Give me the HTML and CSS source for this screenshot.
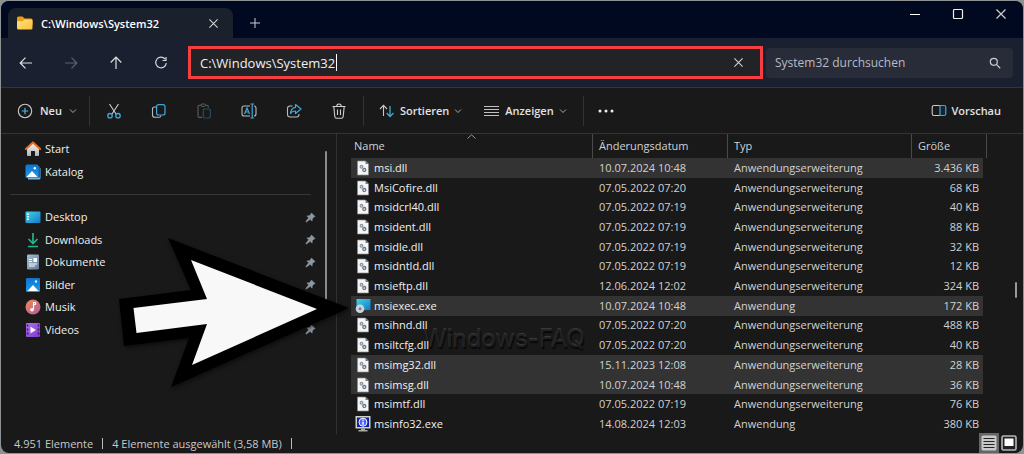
FILE: index.html
```html
<!DOCTYPE html>
<html lang="de">
<head>
<meta charset="utf-8">
<title>C:\Windows\System32</title>
<link rel="stylesheet" href="styles.css">
</head>
<body>
<svg class="defs" aria-hidden="true">
  <defs>
    <linearGradient id="g-folder" x1="0" y1="0" x2="1" y2="1"><stop offset="0" stop-color="#ffe28c"/><stop offset="1" stop-color="#fcc02e"/></linearGradient>
    <linearGradient id="g-desk" x1="0" y1="0" x2="1" y2="1"><stop offset="0" stop-color="#3fd6e6"/><stop offset="1" stop-color="#1478c8"/></linearGradient>
    <linearGradient id="g-pic" x1="0" y1="0" x2="0" y2="1"><stop offset="0" stop-color="#1173cf"/><stop offset="1" stop-color="#199bea"/></linearGradient>
    <linearGradient id="g-music" x1="0" y1="0" x2="1" y2="1"><stop offset="0" stop-color="#f08a52"/><stop offset="1" stop-color="#b15a9c"/></linearGradient>
    <linearGradient id="g-video" x1="0" y1="0" x2="1" y2="1"><stop offset="0" stop-color="#b070f0"/><stop offset="1" stop-color="#8038cf"/></linearGradient>
    <linearGradient id="g-doc" x1="0" y1="0" x2="1" y2="1"><stop offset="0" stop-color="#a9bdd2"/><stop offset="1" stop-color="#5f7b9b"/></linearGradient>
    <linearGradient id="g-house" x1="0" y1="0" x2="0" y2="1"><stop offset="0" stop-color="#f4f4f4"/><stop offset="1" stop-color="#b4b4b4"/></linearGradient>
  </defs>
  <symbol id="dll" viewBox="0 0 14 16">
    <path d="M1.500 1h8l3 3v11h-11z" fill="#f5f5f5" stroke="#8d8d8d" stroke-width=".7"/>
    <path d="M9.500 1v3h3z" fill="#777"/>
    <circle cx="5.500" cy="6.800" r="1.300" fill="none" stroke="#8a97a3" stroke-width="1.300"/>
    <circle cx="8.300" cy="10" r="1.500" fill="none" stroke="#697785" stroke-width="1.300"/>
  </symbol>
  <symbol id="pin" viewBox="0 0 12 12">
    <path d="M7 1l4 4-1.200.5-1.800 1.800-.3 2.700-2-2L1.500 11l-.7-.6L4 6.400 2 4.300l2.800-.3L6.500 2.200z" fill="#8d979f" stroke="#8d979f" stroke-width=".6"/>
  </symbol>
  <symbol id="chev" viewBox="0 0 8 8"><path d="M1 2.500l3 3 3-3" fill="none" stroke="#aaa" stroke-width="1"/></symbol>
  <symbol id="cross" viewBox="0 0 12 12"><path d="M1.500 1.500l9 9m0-9l-9 9" fill="none" stroke="#d0d0d0" stroke-width="1.200"/></symbol>
</svg>

<main class="window">
  <header class="tabbar">
    <div class="tab">
      <svg width="16" height="14" viewBox="0 0 16 14"><path d="M0 2q0-1.500 1.500-1.500h4L7.500 2.500H14q1.500 0 1.500 1.500v5H0z" fill="#e8a010"/><path d="M0 5.200h5.500L7.500 3.500h6.500q1.500 0 1.500 1.200V12q0 1.500-1.500 1.500h-12.500Q0 13.500 0 12z" fill="url(#g-folder)"/></svg>
      <span class="tab-title">C:\Windows\System32</span>
      <button class="icon-btn" aria-label="Tab schließen"><svg width="11" height="11"><use href="#cross"/></svg></button>
    </div>
    <button class="icon-btn new-tab" aria-label="Neuer Tab"><svg width="12" height="12" viewBox="0 0 12 12"><path d="M6 1v10M1 6h10" stroke="#c8ccd4" fill="none"/></svg></button>
    <div class="caption">
      <button class="icon-btn" aria-label="Minimieren"><svg width="12" height="12" viewBox="0 0 12 12"><path d="M1 6.500h10" stroke="#fff" fill="none"/></svg></button>
      <button class="icon-btn" aria-label="Maximieren"><svg width="12" height="12" viewBox="0 0 12 12"><rect x="1.500" y="1.500" width="9" height="9" rx="1" stroke="#eee" fill="none" stroke-width="1.200"/></svg></button>
      <button class="icon-btn" aria-label="Schließen"><svg width="12" height="12"><use href="#cross"/></svg></button>
    </div>
  </header>

  <nav class="navbar" aria-label="Navigation">
    <div class="nav-buttons">
      <button class="icon-btn" aria-label="Zurück"><svg width="14" height="14" viewBox="0 0 14 14"><path d="M13 7H1.500M6.500 1.700L1.200 7l5.300 5.300" stroke="#e0e0e0" fill="none" stroke-width="1.200"/></svg></button>
      <button class="icon-btn" aria-label="Vorwärts"><svg width="14" height="14" viewBox="0 0 14 14"><path d="M1 7h11.500M7.500 1.700L12.800 7l-5.300 5.300" stroke="#5d626e" fill="none" stroke-width="1.200"/></svg></button>
      <button class="icon-btn" aria-label="Nach oben"><svg width="14" height="14" viewBox="0 0 14 14"><path d="M7 13V1.500M1.700 6.500L7 1.200l5.300 5.300" stroke="#e0e0e0" fill="none" stroke-width="1.200"/></svg></button>
      <button class="icon-btn" aria-label="Aktualisieren"><svg width="14" height="14" viewBox="0 0 14 14"><path d="M11 3A5.300 5.300 0 1 0 12.300 7M12 1v3.500H8.500" stroke="#d8d8d8" fill="none" stroke-width="1.200"/></svg></button>
    </div>
    <div class="address">
      <input class="address-input" type="text" aria-label="Adresse" value="C:\Windows\System32">
      <span class="caret"></span>
      <button class="icon-btn clear" aria-label="Leeren"><svg width="11" height="11"><use href="#cross"/></svg></button>
    </div>
    <div class="search">
      <input class="search-input" type="text" aria-label="Suchen" placeholder="System32 durchsuchen">
      <button class="icon-btn" aria-label="Suche starten"><svg width="12" height="12" viewBox="0 0 12 12"><circle cx="4.800" cy="4.800" r="3.500" fill="none" stroke="#ccc" stroke-width="1.200"/><path d="M7.400 7.400l3.800 3.800" stroke="#ccc" stroke-width="1.300"/></svg></button>
    </div>
  </nav>

  <div class="toolbar">
    <button class="tool new"><svg width="16" height="16" viewBox="0 0 16 16"><circle cx="8" cy="8" r="6.700" fill="none" stroke="#c8c8c8" stroke-width="1.100"/><path d="M8 4.800v6.400M4.800 8h6.400" stroke="#4cb4e8" stroke-width="1.200"/></svg>Neu<svg width="8" height="8"><use href="#chev"/></svg></button>
    <div class="actions">
      <button class="icon-btn" aria-label="Ausschneiden"><svg width="16" height="16" viewBox="0 0 16 16"><path d="M3.500 1l6.500 10M12.500 1L6 11" stroke="#d0d0d0" stroke-width="1.100"/><circle cx="4" cy="12.700" r="2.200" fill="none" stroke="#3fa8dc" stroke-width="1.300"/><circle cx="12" cy="12.700" r="2.200" fill="none" stroke="#3fa8dc" stroke-width="1.300"/></svg></button>
      <button class="icon-btn" aria-label="Kopieren"><svg width="16" height="16" viewBox="0 0 16 16"><path d="M5 4H3.500Q1.500 4 1.500 6v6q0 2.300 2.300 2.300H8q1.800 0 2-1.800" fill="none" stroke="#bbb" stroke-width="1.100"/><rect x="5.600" y="1.600" width="8.400" height="10.400" rx="2" fill="none" stroke="#3fa8dc" stroke-width="1.200"/></svg></button>
      <button class="icon-btn" aria-label="Einfügen"><svg width="16" height="16" viewBox="0 0 16 16"><path d="M6 14.400H3.500Q2 14.400 2 13V3.500Q2 2.200 3.500 2.200H5M9.500 2.200H11q1.300 0 1.300 1.300v1" fill="none" stroke="#5e5e5e" stroke-width="1.100"/><rect x="5" y="1" width="4.500" height="2.400" rx="1" fill="none" stroke="#5e5e5e"/><rect x="7.300" y="6" width="7" height="9" rx="1.200" fill="none" stroke="#244f68" stroke-width="1.200"/></svg></button>
      <button class="icon-btn" aria-label="Umbenennen"><svg width="16" height="16" viewBox="0 0 16 16"><path d="M9 3H3Q1 3 1 5v6q0 2 2 2h6M13 3q2 0 2 2v6q0 2-2 2" fill="none" stroke="#bbb" stroke-width="1.100"/><path d="M3.500 11L6 5l2.500 6M4.400 9h3.200M9.500 1h3.500M9.500 15h3.500M11.200 1v14" fill="none" stroke="#3fa8dc" stroke-width="1.200"/></svg></button>
      <button class="icon-btn" aria-label="Freigeben"><svg width="16" height="16" viewBox="0 0 16 16"><path d="M6.500 3H4Q1.500 3 1.500 5.500v6Q1.500 14 4 14h6.500q2.500 0 2.500-2.500V11" fill="none" stroke="#bbb" stroke-width="1.100"/><path d="M9.500 1.500L15 6l-5.500 4.500V8Q6 8 4.500 10.500 5 5 9.500 4.300z" fill="none" stroke="#3fa8dc" stroke-width="1.200" stroke-linejoin="round"/></svg></button>
      <button class="icon-btn" aria-label="Löschen"><svg width="16" height="16" viewBox="0 0 16 16"><path d="M1.500 3.500h13M5.700 3.500Q5.700 1 8 1t2.300 2.500M2.800 3.500l1 10q.2 1.700 1.700 1.700h5q1.500 0 1.700-1.700l1-10M6.500 6.500v5.500M9.500 6.500v5.500" fill="none" stroke="#d0d0d0" stroke-width="1.100"/></svg></button>
    </div>
    <div class="views">
      <button class="tool"><svg width="16" height="16" viewBox="0 0 16 16"><path d="M4.500 13V2.500M1 6l3.500-3.700L8 6" fill="none" stroke="#c8c8c8" stroke-width="1.100"/><path d="M11 3v10.500M7.700 10l3.300 3.500 3.500-3.500" fill="none" stroke="#3fa8dc" stroke-width="1.300"/></svg>Sortieren<svg width="8" height="8"><use href="#chev"/></svg></button>
      <button class="tool"><svg width="16" height="16" viewBox="0 0 16 16"><path d="M0 3.500h15M0 6.500h15M0 9.500h15M0 12.500h15" stroke="#c0c0c0"/></svg>Anzeigen<svg width="8" height="8"><use href="#chev"/></svg></button>
    </div>
    <button class="icon-btn more" aria-label="Mehr"><svg width="16" height="4" viewBox="0 0 16 4"><circle cx="2" cy="2" r="1.500" fill="#eee"/><circle cx="8" cy="2" r="1.500" fill="#eee"/><circle cx="14" cy="2" r="1.500" fill="#eee"/></svg></button>
    <button class="tool preview"><svg width="16" height="14" viewBox="0 0 16 14"><path d="M9 1.500H3q-1.800 0-1.800 1.800v6.400q0 1.800 1.800 1.800h6" fill="none" stroke="#ccc" stroke-width="1.100"/><path d="M9 1.500h4q1.800 0 1.800 1.800v6.400q0 1.800-1.800 1.800H9z" fill="#152630" stroke="#3fa8dc" stroke-width="1.200"/></svg>Vorschau</button>
  </div>

  <div class="content">
    <aside class="sidebar">
      <ul class="places short">
        <li><a href="#"><svg width="16" height="16" viewBox="0 0 16 16"><path d="M2 7.500L8 2l6 5.500V14q0 1-1 1H10V10H6v5H3q-1 0-1-1z" fill="url(#g-house)"/><path d="M.8 8L8 1.400 15.200 8" fill="none" stroke="#e86f1c" stroke-width="2" stroke-linejoin="round" stroke-linecap="round"/></svg>Start</a></li>
        <li><a href="#"><svg width="16" height="16" viewBox="0 0 16 16"><path d="M3 4h12.500v10q0 1.500-1.500 1.500H3z" fill="#6fb7ef"/><path d="M3 2.500h12v11H3z" fill="#0f5fae"/><rect x=".5" y=".5" width="13" height="13.500" rx="1.500" fill="url(#g-pic)"/><path d="M1.500 13L7 7l5.500 6z" fill="#fff"/><circle cx="9.800" cy="4.200" r="1.200" fill="#fff"/></svg>Katalog</a></li>
      </ul>
      <hr class="divider">
      <ul class="places long">
        <li><a href="#"><svg width="16" height="16" viewBox="0 0 16 16"><rect x=".5" y="2.500" width="15" height="11.500" rx="1" fill="url(#g-desk)"/><path d="M2 4.500h2v1.500H2zM2 7h2v1.500H2zM2 9.500h2V11H2z" fill="#e8feff"/></svg>Desktop</a><svg class="pin" width="11" height="11"><use href="#pin"/></svg></li>
        <li><a href="#"><svg width="16" height="16" viewBox="0 0 16 16"><path d="M8 1v10M3.500 7L8 11.500 12.500 7M3 14.500h10" fill="none" stroke="#1fb58d" stroke-width="1.700"/></svg>Downloads</a><svg class="pin" width="11" height="11"><use href="#pin"/></svg></li>
        <li><a href="#"><svg width="16" height="16" viewBox="0 0 16 16"><rect x="2" y=".5" width="12" height="15" rx="1.300" fill="url(#g-doc)"/><path d="M4 5h3v1H4zM4 7h3v1H4zM4 9.500h8v1H4zM4 11.500h6v1H4zM8.500 4H12v4H8.500z" fill="#fff"/></svg>Dokumente</a><svg class="pin" width="11" height="11"><use href="#pin"/></svg></li>
        <li><a href="#"><svg width="16" height="16" viewBox="0 0 16 16"><rect x="1" y="1" width="14" height="14" rx="1.300" fill="url(#g-pic)"/><path d="M2.500 14L8 8l5.500 6z" fill="#fff"/><circle cx="11" cy="4.500" r="1.200" fill="#d8f0ff"/></svg>Bilder</a><svg class="pin" width="11" height="11"><use href="#pin"/></svg></li>
        <li><a href="#"><svg width="16" height="16" viewBox="0 0 16 16"><circle cx="8" cy="8" r="7.500" fill="url(#g-music)"/><path d="M8.500 10.500v-7h2v2h-2" fill="none" stroke="#fff" stroke-width="1.200"/><circle cx="7" cy="10.700" r="1.800" fill="#fff"/></svg>Musik</a><svg class="pin" width="11" height="11"><use href="#pin"/></svg></li>
        <li><a href="#"><svg width="16" height="16" viewBox="0 0 16 16"><rect x="1" y="1" width="14" height="14" rx="1.300" fill="url(#g-video)"/><path d="M2.500 2.500v11M13.500 2.500v11" stroke="#3c1470" stroke-width="1.500" stroke-dasharray="2 2"/><path d="M5.500 4.700L11 8l-5.500 3.300z" fill="#fff"/></svg>Videos</a><svg class="pin" width="11" height="11"><use href="#pin"/></svg></li>
      </ul>
      <span class="side-scroll"></span>
    </aside>

    <section class="pane">
      <table class="files">
        <thead><tr><th class="c-name">Name<svg class="sort" width="9" height="5" viewBox="0 0 9 5"><path d="M.5 4.500l4-3.700 4 3.700" fill="none" stroke="#999"/></svg></th><th class="c-date">Änderungsdatum</th><th class="c-type">Typ</th><th class="c-size">Größe</th></tr></thead>
        <tbody>
          <tr class="sel"><td><svg><use href="#dll"/></svg>msi.dll</td><td>10.07.2024 10:48</td><td>Anwendungserweiterung</td><td>3.436 KB</td></tr>
          <tr><td><svg><use href="#dll"/></svg>MsiCofire.dll</td><td>07.05.2022 07:20</td><td>Anwendungserweiterung</td><td>68 KB</td></tr>
          <tr><td><svg><use href="#dll"/></svg>msidcrl40.dll</td><td>07.05.2022 07:19</td><td>Anwendungserweiterung</td><td>40 KB</td></tr>
          <tr><td><svg><use href="#dll"/></svg>msident.dll</td><td>07.05.2022 07:19</td><td>Anwendungserweiterung</td><td>88 KB</td></tr>
          <tr><td><svg><use href="#dll"/></svg>msidle.dll</td><td>07.05.2022 07:19</td><td>Anwendungserweiterung</td><td>32 KB</td></tr>
          <tr><td><svg><use href="#dll"/></svg>msidntld.dll</td><td>07.05.2022 07:19</td><td>Anwendungserweiterung</td><td>12 KB</td></tr>
          <tr><td><svg><use href="#dll"/></svg>msieftp.dll</td><td>12.06.2024 12:02</td><td>Anwendungserweiterung</td><td>324 KB</td></tr>
          <tr class="sel"><td><svg viewBox="0 0 16 16"><path d="M1.500 1h14v11h-14z" fill="url(#g-desk)"/><circle cx="5" cy="10.800" r="4.300" fill="#ccd4da"/><circle cx="5" cy="10.800" r="1.500" fill="#6c8494"/></svg>msiexec.exe</td><td>10.07.2024 10:48</td><td>Anwendung</td><td>172 KB</td></tr>
          <tr><td><svg><use href="#dll"/></svg>msihnd.dll</td><td>07.05.2022 07:20</td><td>Anwendungserweiterung</td><td>488 KB</td></tr>
          <tr><td><svg><use href="#dll"/></svg>msiltcfg.dll</td><td>07.05.2022 07:20</td><td>Anwendungserweiterung</td><td>40 KB</td></tr>
          <tr class="sel"><td><svg><use href="#dll"/></svg>msimg32.dll</td><td>15.11.2023 12:08</td><td>Anwendungserweiterung</td><td>28 KB</td></tr>
          <tr class="sel"><td><svg><use href="#dll"/></svg>msimsg.dll</td><td>10.07.2024 10:48</td><td>Anwendungserweiterung</td><td>36 KB</td></tr>
          <tr><td><svg><use href="#dll"/></svg>msimtf.dll</td><td>07.05.2022 07:19</td><td>Anwendungserweiterung</td><td>76 KB</td></tr>
          <tr><td><svg viewBox="0 0 16 16"><path d="M.5 0h15v12.500H.5z" fill="#d2d2c8"/><path d="M2 1.500h12V11H2z" fill="#1420a8"/><circle cx="8" cy="6.200" r="4" fill="#4264ff" stroke="#fff"/><path d="M8 3.500v1.300M8 5.800v3" stroke="#fff" stroke-width="1.500"/><path d="M6 12.500h4v1.500h2.500v1.500h-9V14H6z" fill="#aaa"/></svg>msinfo32.exe</td><td>14.08.2024 12:03</td><td>Anwendung</td><td>380 KB</td></tr>
        </tbody>
      </table>
      <span class="pane-scroll"></span>
    </section>
  </div>

  <footer class="status">
    <span>4.951 Elemente</span><span class="bar"></span><span>4 Elemente ausgewählt (3,58 MB)</span><span class="bar"></span>
    <div class="modes">
      <button class="mode active" aria-label="Details"><svg width="16" height="16" viewBox="0 0 16 16"><rect x=".5" y=".5" width="15" height="15" rx="1.500" fill="#c8c8c8"/><path d="M2.500 3.500h11M2.500 6.500h11M2.500 9.500h11M2.500 12.500h11" stroke="#222"/></svg></button>
      <button class="mode" aria-label="Große Symbole"><svg width="16" height="16" viewBox="0 0 16 16"><rect x="1" y="1" width="14" height="14" rx="1.500" fill="#222" stroke="#b8b8b8" stroke-width="1.600"/><path d="M3.500 3.500h9V11h-9z" fill="#fff"/></svg></button>
    </div>
  </footer>

  <span class="watermark">Windows-FAQ</span>
  <svg class="pointer" width="240" height="170" viewBox="0 0 240 170" aria-hidden="true">
    <path d="M9 70L81 61 58 9 239 79 61 158 79 109 14 117z" fill="#000"/>
    <path d="M23.500 79L97 70 81 31 207 80 82 136 97 95 26.500 104z" fill="#f8f8f8"/>
  </svg>
</main>
</body>
</html>
```

FILE: styles.css
```css
* { box-sizing: border-box; }

body {
  margin: 0;
  padding: 1px;
  min-height: 100vh;
  display: flex;
  background: #8f9292;
  font-family: "Open Sans", "Noto Sans", sans-serif;
  font-size: 11px;
  color: #d2d2d2;
}

button, input { font: inherit; color: inherit; border: 0; background: none; padding: 0; margin: 0; }
svg { display: block; flex: none; }
.defs { position: absolute; width: 0; height: 0; }

.window {
  position: relative;
  flex: 1;
  min-width: 0;
  display: flex;
  flex-direction: column;
  overflow: hidden;
  border-radius: 8px;
  background: #191919;
}

.icon-btn { display: flex; align-items: center; justify-content: center; width: 16px; height: 16px; }

.tabbar { display: flex; height: 37px; padding-left: 7px; background: #000920; }
.tab {
  display: flex;
  align-items: center;
  width: 225px;
  margin-top: 7px;
  padding: 0 12px 0 9px;
  border-radius: 8px 8px 0 0;
  background: #1b202d;
  color: #fff;
  font-weight: 600;
}
.tab-title { flex: 1; margin-left: 8px; }
.new-tab { margin: 14px 0 0 14px; }
.caption { display: flex; gap: 27px; margin: 5px 14px 0 auto; }

.navbar {
  display: flex;
  align-items: center;
  height: 50px;
  padding-right: 10px;
  border-bottom: 1px solid #343638;
  background: #1b2030;
}
.nav-buttons { display: flex; gap: 29px; width: 187px; padding-left: 17px; }
.address {
  flex: 1;
  min-width: 0;
  display: flex;
  align-items: center;
  height: 33px;
  padding: 0 14px 0 9px;
  border: 3px solid #f53e40;
  background: #222326;
  color: #f0f0f0;
  font-size: 13px;
}
.address-input { width: 136px; height: 24px; }
.caret { width: 1px; height: 17px; background: #fff; }
.clear { margin-left: auto; }
.search {
  display: flex;
  align-items: center;
  width: 247px;
  height: 30px;
  margin-left: 3px;
  padding: 0 10px 0 9px;
  border-radius: 4px;
  background: #282c38;
  font-size: 12px;
}
.search-input { flex: 1; min-width: 0; }
.search-input::placeholder { color: #b8bbc2; opacity: 1; }

.toolbar {
  display: flex;
  align-items: center;
  height: 46px;
  padding: 0 22px 0 16px;
  border-bottom: 1px solid #343434;
  font-weight: 600;
}
.tool { display: flex; align-items: center; gap: 5px; color: #e2e2e2; }
.new { width: 72px; gap: 7px; }
.actions, .views { display: flex; border-right: 1px solid #333; height: 30px; align-items: center; }
.actions { gap: 29px; padding: 0 16px; border-left: 1px solid #333; }
.views { gap: 22px; padding: 0 16px 0 15px; }
.more { margin-left: 14px; }
.preview { margin-left: auto; }

.content { position: relative; z-index: 1; flex: 1; min-height: 0; display: flex; }
.sidebar { position: relative; width: 336px; border-right: 1px solid #303030; font-size: 11px; }
.places { display: grid; list-style: none; margin: 0; padding: 0 20px 0 24px; grid-auto-rows: 1fr; }
.short { min-height: 45px; margin-top: 4px; }
.long { min-height: 135px; }
.places li { display: flex; align-items: center; justify-content: space-between; }
.places a { display: flex; align-items: center; gap: 4px; color: #f0f0f0; text-decoration: none; line-height: 16px; }
.divider { height: 1px; margin: 11px 25px 11px 9px; border: 0; background: #363636; }
.side-scroll { position: absolute; right: 9px; top: 17px; width: 2px; height: 149px; border-radius: 1px; background: #8a8a8a; }

.pane { position: relative; flex: 1; min-width: 0; padding: 0 36px 0 14px; }
.files { width: 100%; height: 100%; table-layout: fixed; border-spacing: 0; line-height: 16px; }
.files th {
  position: relative;
  height: 24px;
  padding: 0 0 0 6px;
  border-right: 1px solid #4a4a4a;
  text-align: left;
  font-weight: 400;
}
.files .c-name { padding-left: 3px; }
.c-date { width: 135px; }
.c-type { width: 184px; }
.c-size { width: 75px; }
.sort { position: absolute; left: 48%; top: 0; }
.files td { padding: 0 0 0 6px; white-space: nowrap; }
.files td:first-child { color: #f0f0f0; padding-left: 4px; }
.files td:first-child svg { float: left; width: 16px; height: 16px; margin-right: 3px; }
.files td:last-child { text-align: right; padding-right: 4px; border-right: 4px solid transparent; background-clip: padding-box; }
.sel td { background-color: #333; }
.pane-scroll { position: absolute; right: 6px; top: 148px; width: 2px; height: 16px; border-radius: 1px; background: #999; }

.status { display: flex; align-items: center; height: 19px; padding-left: 13px; color: #c8c8c8; }
.bar { width: 1px; height: 11px; margin: 0 9px; background: #bbb; }
.modes { display: flex; align-self: end; margin-left: auto; padding-right: 4px; }
.mode { display: flex; align-items: center; justify-content: center; width: 20px; height: 20px; }
.mode.active { background: #666; }

.watermark {
  position: absolute;
  left: 422px;
  top: 322px;
  color: #222;
  font-family: Inter, sans-serif;
  font-size: 24px;
  line-height: 32px;
  text-shadow: 1px 2px 1px #080808, 0 -1px 0 #3a3a3a;
}
.pointer { position: absolute; z-index: 2; left: 109px; top: 228px; filter: drop-shadow(1px 2px 2px #0008); }
```
